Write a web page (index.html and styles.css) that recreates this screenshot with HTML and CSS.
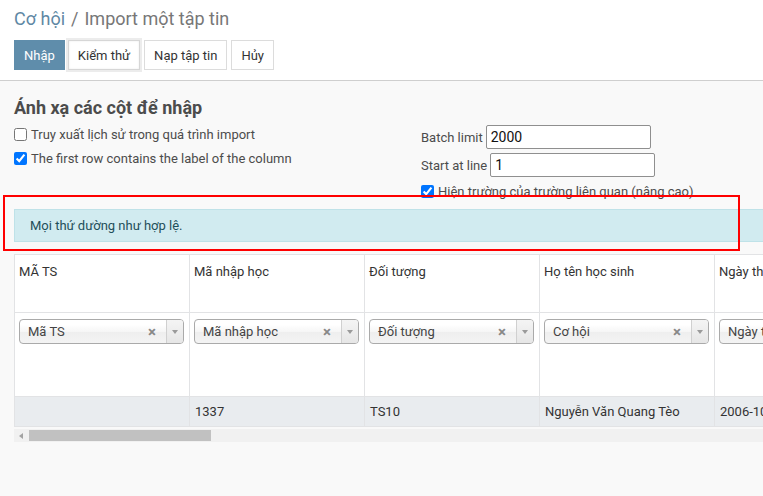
FILE: index.html
```html
<!DOCTYPE html>
<html lang="vi">
<head>
<meta charset="utf-8">
<title>Import một tập tin</title>
<link rel="stylesheet" href="styles.css">
</head>
<body>
<div class="control-panel">
  <ol class="breadcrumb">
    <li class="crumb-link">Cơ hội</li>
    <li class="crumb-sep">/</li>
    <li class="crumb-active">Import một tập tin</li>
  </ol>
  <div class="buttons">
    <button class="btn btn-primary">Nhập</button>
    <button class="btn btn-focus">Kiểm thử</button>
    <button class="btn">Nạp tập tin</button>
    <button class="btn">Hủy</button>
  </div>
</div>

<div class="content">
  <div class="settings">
    <div class="settings-left">
      <h3 class="title">Ánh xạ các cột để nhập</h3>
      <label class="check-row"><input type="checkbox"> Truy xuất lịch sử trong quá trình import</label>
      <label class="check-row"><input type="checkbox" checked> The first row contains the label of the column</label>
    </div>
    <div class="settings-right">
      <div class="field-row"><span class="field-label">Batch limit</span><input class="text-input" type="text" value="2000"></div>
      <div class="field-row"><span class="field-label">Start at line</span><input class="text-input" type="text" value="1"></div>
      <label class="check-row check-row-small"><input type="checkbox" checked> Hiện trường của trường liên quan (nâng cao)</label>
    </div>
  </div>

  <div class="alert">Mọi thứ dường như hợp lệ.</div>

  <div class="table-wrap">
    <table class="preview">
      <tr class="head-row">
        <td>MÃ TS</td>
        <td>Mã nhập học</td>
        <td>Đối tượng</td>
        <td>Họ tên học sinh</td>
        <td>Ngày thi</td>
        <td>Ngày sinh</td>
      </tr>
      <tr class="select-row">
        <td><div class="select2"><span class="sel-text">Mã TS</span><span class="sel-clear">×</span><span class="sel-arrow"></span></div></td>
        <td><div class="select2"><span class="sel-text">Mã nhập học</span><span class="sel-clear">×</span><span class="sel-arrow"></span></div></td>
        <td><div class="select2"><span class="sel-text">Đối tượng</span><span class="sel-clear">×</span><span class="sel-arrow"></span></div></td>
        <td><div class="select2"><span class="sel-text">Cơ hội</span><span class="sel-clear">×</span><span class="sel-arrow"></span></div></td>
        <td><div class="select2"><span class="sel-text">Ngày thi</span><span class="sel-clear">×</span><span class="sel-arrow"></span></div></td>
        <td><div class="select2"><span class="sel-text">Ngày sinh</span><span class="sel-clear">×</span><span class="sel-arrow"></span></div></td>
      </tr>
      <tr class="data-row">
        <td></td>
        <td>1337</td>
        <td>TS10</td>
        <td>Nguyễn Văn Quang Tèo</td>
        <td>2006-10-12</td>
        <td>2006-10-12</td>
      </tr>
    </table>
  </div>
  <div class="scrollbar">
    <span class="scroll-arrow"></span>
    <span class="scroll-thumb"></span>
  </div>
</div>

<div class="annotation"></div>
</body>
</html>
```

FILE: styles.css
```css
* { box-sizing: border-box; }

html, body {
  margin: 0;
  padding: 0;
  width: 763px;
  height: 496px;
  overflow: hidden;
  background: #f9f9f9;
  font-family: Roboto, "Noto Sans", Arial, sans-serif;
  font-size: 13px;
  color: #4c4c4c;
}

.control-panel {
  background: #fff;
  border-bottom: 1px solid #cfcfcf;
  height: 81px;
  padding: 6px 14px 0 14px;
}

.breadcrumb {
  list-style: none;
  margin: 0;
  padding: 0;
  display: flex;
  gap: 6px;
  font-size: 18px;
  line-height: 26px;
  height: 28px;
}
.crumb-link { color: #5f88a4; }
.crumb-sep { color: #777; }
.crumb-active { color: #777; }

.buttons {
  display: flex;
  gap: 4px;
  margin-top: 6px;
}
.btn {
  font-family: inherit;
  font-size: 13px;
  height: 30px;
  padding: 0 9px;
  border: 1px solid #dcdcdc;
  background: #fff;
  color: #333;
  border-radius: 0;
}
.btn-primary {
  background: #5f8dab;
  border-color: #5f8dab;
  color: #fff;
  padding: 0 9px;
}
.btn-focus {
  margin-left: -1px;
  box-shadow: 0 0 0 2px #ececec, inset 0 0 2px #e6e6e6;
  border-color: #d6d6d6;
}

.content {
  padding-left: 14px;
  position: relative;
}

.settings {
  display: grid;
  grid-template-columns: 407px 1fr;
  height: 119px;
}

.title {
  margin: 16px 0 3px 0;
  font-size: 18px;
  line-height: 22px;
  font-weight: bold;
  color: #4c4c4c;
}

.check-row {
  display: flex;
  align-items: center;
  height: 24px;
  gap: 4px;
  color: #4c4c4c;
}
.check-row input {
  margin: 0;
  width: 13px;
  height: 13px;
}

.settings-right {
  padding-top: 44px;
}
.field-row {
  display: flex;
  align-items: center;
  height: 24px;
  margin-bottom: 4px;
  gap: 3px;
}
.field-label { color: #4c4c4c; }
.text-input {
  width: 165px;
  height: 24px;
  border: 1px solid #8f8f8f;
  border-radius: 2px;
  padding: 0 4px;
  font-family: inherit;
  font-size: 14px;
  color: #111;
  background: #fff;
}
.check-row-small {
  height: 20px;
  margin-top: 3px;
}

.alert {
  margin-top: 9px;
  margin-right: -10px;
  background: #d1ebf0;
  border: 1px solid #bfe2e8;
  color: #1f4f5a;
  padding: 7px 15px;
  line-height: 17px;
}

.table-wrap {
  margin-top: 12px;
  overflow: hidden;
}
.preview {
  border-collapse: collapse;
  table-layout: fixed;
  width: 1050px;
  background: #fff;
}
.preview td {
  width: 175px;
  border: 1px solid #e2e3e5;
  vertical-align: top;
  color: #333;
  padding: 0 4px;
}
.head-row td {
  height: 58px;
  padding-top: 8px;
  line-height: 18px;
}
.select-row td {
  height: 84px;
  padding-top: 6px;
}
.data-row td {
  height: 30px;
  background: #e9ecef;
  vertical-align: middle;
  padding-left: 5px;
}

.select2 {
  display: flex;
  align-items: center;
  width: 165px;
  height: 25px;
  border: 1px solid #aaa;
  border-radius: 4px;
  background: linear-gradient(#ffffff 20%, #f6f6f6 50%, #eeeeee 52%, #f4f4f4 100%);
  overflow: hidden;
}
.sel-text {
  flex: 1;
  padding-left: 8px;
  color: #444;
  white-space: nowrap;
  overflow: hidden;
}
.sel-clear {
  width: 13px;
  color: #888;
  font-weight: bold;
  font-size: 15px;
  margin-right: 5px;
}
.sel-arrow {
  width: 17px;
  height: 100%;
  border-left: 1px solid #d0d0d0;
  background: linear-gradient(#f4f4f4, #e6e6e6);
  position: relative;
}
.sel-arrow::after {
  content: "";
  position: absolute;
  left: 5px;
  top: 10px;
  border-left: 3px solid transparent;
  border-right: 3px solid transparent;
  border-top: 4px solid #9a9a9a;
}

.scrollbar {
  margin-top: 2px;
  height: 13px;
  background: #f1f1f1;
  display: flex;
  align-items: center;
}
.scroll-arrow {
  width: 0;
  height: 0;
  margin-left: 5px;
  margin-right: 6px;
  border-top: 3px solid transparent;
  border-bottom: 3px solid transparent;
  border-right: 4px solid #a3a3a3;
}
.scroll-thumb {
  width: 182px;
  height: 11px;
  background: #c1c1c1;
}

.annotation {
  position: absolute;
  left: 3px;
  top: 195px;
  width: 737px;
  height: 56px;
  border: 2px solid #ff0000;
}
```
